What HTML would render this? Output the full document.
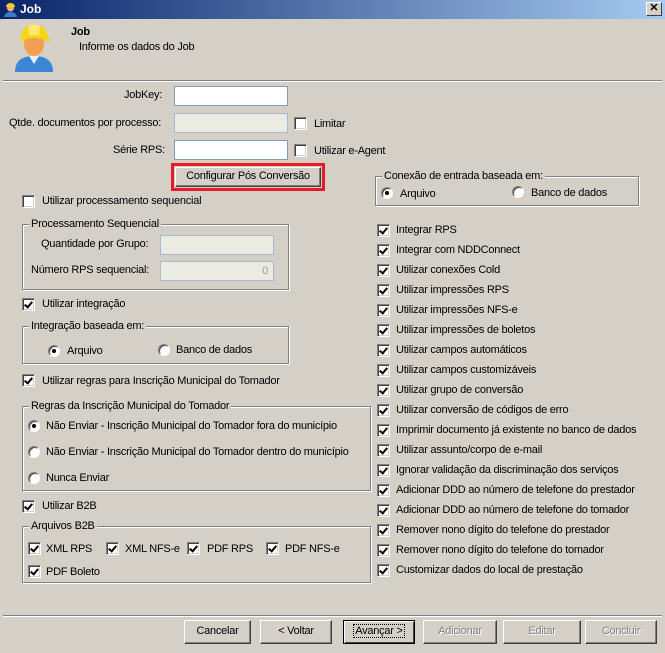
<!DOCTYPE html>
<html><head><meta charset="utf-8">
<style>
*{margin:0;padding:0;box-sizing:border-box}
body{width:665px;height:653px;background:#d4d0c8;font-family:"Liberation Sans",sans-serif;font-size:11px;color:#000;position:relative;overflow:hidden;letter-spacing:-0.25px}
.a{position:absolute;white-space:nowrap;line-height:13px}
.title{position:absolute;left:0;top:0;width:665px;height:19px;background:linear-gradient(to right,#0a246a,#a6caf0);color:#fff;font-weight:bold;font-size:12px;line-height:19px;padding-left:20px;letter-spacing:0}
.x{position:absolute;right:3px;top:2px;width:16px;height:14px;background:#d4d0c8;border:1px solid;border-color:#fff #404040 #404040 #fff;font-size:11px;font-weight:bold;color:#000;line-height:11px;text-align:center}
.inp{position:absolute;height:20px;background:#fff;border:1px solid #7f9db9}
.inp.d{background:#ebebe4;border-color:#a5b9d0}
.cb{position:absolute;width:13px;height:13px;background:#fff;border:1px solid;border-color:#808080 #fff #fff #808080;box-shadow:inset 1px 1px 0 #404040,inset -1px -1px 0 #d4d0c8}
.cb.on::after{content:"";position:absolute;left:3px;top:1px;width:3px;height:6px;border:solid #000;border-width:0 2px 2px 0;transform:rotate(40deg)}
.rb{position:absolute;width:12px;height:12px;border-radius:50%;background:#fff;border:1px solid;border-color:#808080 #fff #fff #808080;box-shadow:inset 1px 1px 0 #404040}
.rb.on::after{content:"";position:absolute;left:3px;top:3px;width:4px;height:4px;border-radius:50%;background:#000}
.grp{position:absolute;border:1px solid #808080;box-shadow:1px 1px 0 #fff,inset 1px 1px 0 #fff}
.grp>span{position:absolute;left:6px;top:-7px;background:#d4d0c8;padding:0 2px;line-height:13px;white-space:nowrap}
.btn{position:absolute;height:24px;background:#d4d0c8;border:1px solid;border-color:#fff #404040 #404040 #fff;box-shadow:inset -1px -1px 0 #808080;text-align:center;line-height:21px}
.btn.dis{color:#808080;text-shadow:1px 1px 0 #fff}
.sep{position:absolute;left:3px;width:659px;height:2px;border-top:1px solid #808080;border-bottom:1px solid #fff}
</style></head><body>
<div class="title">Job<div class="x">✕</div></div>
<svg style="position:absolute;left:3px;top:2px" width="15" height="15" viewBox="0 0 15 15"><circle cx="7.5" cy="6" r="3.5" fill="#f0b070"/><path d="M3 5a4.5 4 0 0 1 9 0z" fill="#f5d020"/><path d="M1 15q1-5 6.5-5t6.5 5z" fill="#3a7ad0"/></svg>
<!-- header icon -->
<svg style="position:absolute;left:13px;top:22px" width="42" height="52" viewBox="0 0 42 52">
<path d="M2 50q0-16 19-16t19 16z" fill="#3d86d6"/>
<path d="M16 34l5 8 5-8z" fill="#e8f0fa"/>
<ellipse cx="21" cy="22" rx="10" ry="12" fill="#f2a050"/>
<path d="M8 16q0-13 13-13t14 12l3 4h-5q-4-3-12-3t-10 3H7z" fill="#f8d418"/>
<path d="M15 4q6-3 12 0l-1 9h-10z" fill="#fbe870"/>
</svg>
<div class="a" style="left:71px;top:26px;font-weight:bold">Job</div>
<div class="a" style="left:79px;top:41px">Informe os dados do Job</div>
<div class="sep" style="top:80px"></div>

<div class="a" style="left:124px;top:89px">JobKey:</div>
<div class="inp" style="left:174px;top:86px;width:114px"></div>
<div class="a" style="left:9px;top:117px">Qtde. documentos por processo:</div>
<div class="inp d" style="left:174px;top:113px;width:114px"></div>
<div class="cb" style="left:294px;top:117px"></div><div class="a" style="left:314px;top:118px">Limitar</div>
<div class="a" style="left:113px;top:144px">Série RPS:</div>
<div class="inp" style="left:174px;top:140px;width:114px"></div>
<div class="cb" style="left:294px;top:144px"></div><div class="a" style="left:314px;top:145px">Utilizar e-Agent</div>
<div style="position:absolute;left:171px;top:163px;width:154px;height:28px;border:3px solid #e51c24"></div>
<div class="btn" style="left:175px;top:167px;width:146px;height:20px;line-height:17px">Configurar Pós Conversão</div>

<div class="cb" style="left:22px;top:195px"></div><div class="a" style="left:42px;top:195px">Utilizar processamento sequencial</div>
<div class="grp" style="left:22px;top:224px;width:267px;height:66px"><span>Processamento Sequencial</span></div>
<div class="a" style="left:41px;top:238px">Quantidade por Grupo:</div>
<div class="inp d" style="left:160px;top:235px;width:114px"></div>
<div class="a" style="left:31px;top:264px">Número RPS sequencial:</div>
<div class="inp d" style="left:160px;top:261px;width:114px;color:#999;text-align:right;padding-right:5px;line-height:18px">0</div>

<div class="cb on" style="left:22px;top:298px"></div><div class="a" style="left:42px;top:298px">Utilizar integração</div>
<div class="grp" style="left:22px;top:326px;width:267px;height:38px"><span>Integração baseada em:</span></div>
<div class="rb on" style="left:48px;top:345px"></div><div class="a" style="left:67px;top:345px">Arquivo</div>
<div class="rb" style="left:158px;top:344px"></div><div class="a" style="left:176px;top:344px">Banco de dados</div>

<div class="cb on" style="left:22px;top:374px"></div><div class="a" style="left:42px;top:375px">Utilizar regras para Inscrição Municipal do Tomador</div>
<div class="grp" style="left:22px;top:406px;width:349px;height:85px"><span>Regras da Inscrição Municipal do Tomador</span></div>
<div class="rb on" style="left:28px;top:420px"></div><div class="a" style="left:46px;top:420px">Não Enviar - Inscrição Municipal do Tomador fora do município</div>
<div class="rb" style="left:28px;top:446px"></div><div class="a" style="left:46px;top:446px">Não Enviar - Inscrição Municipal do Tomador dentro do município</div>
<div class="rb" style="left:28px;top:472px"></div><div class="a" style="left:46px;top:472px">Nunca Enviar</div>

<div class="cb on" style="left:22px;top:500px"></div><div class="a" style="left:42px;top:500px">Utilizar B2B</div>
<div class="grp" style="left:22px;top:526px;width:349px;height:57px"><span>Arquivos B2B</span></div>
<div class="cb on" style="left:28px;top:542px"></div><div class="a" style="left:46px;top:543px">XML RPS</div>
<div class="cb on" style="left:106px;top:542px"></div><div class="a" style="left:125px;top:543px">XML NFS-e</div>
<div class="cb on" style="left:187px;top:542px"></div><div class="a" style="left:207px;top:543px">PDF RPS</div>
<div class="cb on" style="left:266px;top:542px"></div><div class="a" style="left:285px;top:543px">PDF NFS-e</div>
<div class="cb on" style="left:28px;top:565px"></div><div class="a" style="left:46px;top:566px">PDF Boleto</div>

<div class="grp" style="left:375px;top:176px;width:264px;height:30px"><span>Conexão de entrada baseada em:</span></div>
<div class="rb on" style="left:381px;top:187px"></div><div class="a" style="left:400px;top:188px">Arquivo</div>
<div class="rb" style="left:512px;top:186px"></div><div class="a" style="left:531px;top:187px">Banco de dados</div>

<div class="cb on" style="left:377px;top:224px"></div><div class="a" style="left:396px;top:224px">Integrar RPS</div>
<div class="cb on" style="left:377px;top:244px"></div><div class="a" style="left:396px;top:244px">Integrar com NDDConnect</div>
<div class="cb on" style="left:377px;top:264px"></div><div class="a" style="left:396px;top:264px">Utilizar conexões Cold</div>
<div class="cb on" style="left:377px;top:284px"></div><div class="a" style="left:396px;top:284px">Utilizar impressões RPS</div>
<div class="cb on" style="left:377px;top:304px"></div><div class="a" style="left:396px;top:304px">Utilizar impressões NFS-e</div>
<div class="cb on" style="left:377px;top:324px"></div><div class="a" style="left:396px;top:324px">Utilizar impressões de boletos</div>
<div class="cb on" style="left:377px;top:344px"></div><div class="a" style="left:396px;top:344px">Utilizar campos automáticos</div>
<div class="cb on" style="left:377px;top:364px"></div><div class="a" style="left:396px;top:364px">Utilizar campos customizáveis</div>
<div class="cb on" style="left:377px;top:384px"></div><div class="a" style="left:396px;top:384px">Utilizar grupo de conversão</div>
<div class="cb on" style="left:377px;top:404px"></div><div class="a" style="left:396px;top:404px">Utilizar conversão de códigos de erro</div>
<div class="cb on" style="left:377px;top:424px"></div><div class="a" style="left:396px;top:424px">Imprimir documento já existente no banco de dados</div>
<div class="cb on" style="left:377px;top:444px"></div><div class="a" style="left:396px;top:444px">Utilizar assunto/corpo de e-mail</div>
<div class="cb on" style="left:377px;top:464px"></div><div class="a" style="left:396px;top:464px">Ignorar validação da discriminação dos serviços</div>
<div class="cb on" style="left:377px;top:484px"></div><div class="a" style="left:396px;top:484px">Adicionar DDD ao número de telefone do prestador</div>
<div class="cb on" style="left:377px;top:504px"></div><div class="a" style="left:396px;top:504px">Adicionar DDD ao número de telefone do tomador</div>
<div class="cb on" style="left:377px;top:524px"></div><div class="a" style="left:396px;top:524px">Remover nono dígito do telefone do prestador</div>
<div class="cb on" style="left:377px;top:544px"></div><div class="a" style="left:396px;top:544px">Remover nono dígito do telefone do tomador</div>
<div class="cb on" style="left:377px;top:564px"></div><div class="a" style="left:396px;top:564px">Customizar dados do local de prestação</div>

<div class="sep" style="top:615px"></div>
<div class="btn" style="left:184px;top:620px;width:67px">Cancelar</div>
<div class="btn" style="left:260px;top:620px;width:72px">&lt; Voltar</div>
<div class="btn" style="left:343px;top:620px;width:72px;border:1px solid #000;box-shadow:inset 1px 1px 0 #fff,inset -1px -1px 0 #404040"><span style="outline:1px dotted #000;padding:0 1px">Avançar &gt;</span></div>
<div class="btn dis" style="left:423px;top:620px;width:74px">Adicionar</div>
<div class="btn dis" style="left:503px;top:620px;width:78px">Editar</div>
<div class="btn dis" style="left:585px;top:620px;width:72px">Concluir</div>
</body></html>
